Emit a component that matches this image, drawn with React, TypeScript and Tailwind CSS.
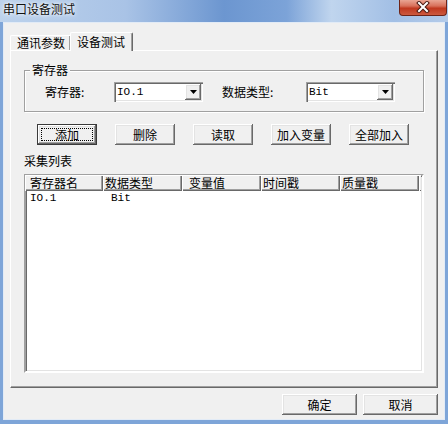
import React from 'react';

const RAISED = 'shadow-[inset_-1px_-1px_0_#696969,inset_1px_1px_0_#ffffff,inset_-2px_-2px_0_#a0a0a0,inset_2px_2px_0_#e3e3e3]';

const COLUMNS = [
    { name: '寄存器名', width: 'w-[78px]', pad: 'pl-[5px]', value: 'IO.1', valuePad: 'pl-[4px]' },
    { name: '数据类型', width: 'w-[79px]', pad: 'pl-[2px]', value: 'Bit', valuePad: 'pl-[7px]' },
    { name: '变量值', width: 'w-[79px]', pad: 'pl-[7px]', value: '', valuePad: 'pl-[4px]' },
    { name: '时间戳', width: 'w-[79px]', pad: 'pl-[2px]', value: '', valuePad: 'pl-[4px]' },
    { name: '质量戳', width: 'w-[79px]', pad: 'pl-[2px]', value: '', valuePad: 'pl-[4px]' },
];

const ACTIONS = ['添加', '删除', '读取', '加入变量', '全部加入'];

const Combo = ({ value }: { value: string }) => (
    <div className="w-[89px] h-[20px] flex p-[2px] bg-white shadow-[inset_1px_1px_0_#a0a0a0,inset_2px_2px_0_#696969,inset_-1px_-1px_0_#ffffff,inset_-2px_-2px_0_#e3e3e3]">
        <span className="flex-1 pl-[1px] font-['Liberation_Mono',monospace] text-[11px] leading-[16px]">{value}</span>
        <span className={`w-[16px] h-[16px] flex items-center justify-center bg-[#f0f0f0] ${RAISED}`}>
            <svg width="7" height="4" viewBox="0 0 7 4">
                <path d="M0 0H7L3.5 4Z" fill="#000" />
            </svg>
        </span>
    </div>
);

const App: React.FC = () => {
    return (
        <div className="w-[448px] h-[424px] flex flex-col bg-[#7ea5d8] font-['Noto_Sans_CJK_SC',sans-serif] text-[12px] text-black">
            {/* Title bar */}
            <div className="h-[22px] flex items-start justify-between bg-[linear-gradient(90deg,#bcd2ec_0%,#a9c3e6_28%,#6c96d0_50%,#7ca3d8_64%,#c0d5ee_74%,#a2bfe5_88%,#b4cbe9_100%)]">
                <span className="pl-[3px] leading-[18px] text-[#111] [text-shadow:0_0_6px_#ffffff,0_0_3px_#ffffff]">串口设备测试</span>
                <div className="w-[48px] h-[16px] mr-[1px] flex items-start justify-center pt-[1px] rounded-b-[4px] border border-t-0 border-[#6e2418] bg-[linear-gradient(180deg,#e9a593_0%,#d8705a_40%,#c0381f_55%,#cc5a3f_100%)]">
                    <svg width="14" height="12" viewBox="0 0 14 12">
                        <path d="M3 2L11 10M11 2L3 10" stroke="#4a1a12" strokeWidth="4" strokeLinecap="square" />
                        <path d="M3 2L11 10M11 2L3 10" stroke="#ffffff" strokeWidth="2" strokeLinecap="square" />
                    </svg>
                </div>
            </div>

            {/* Client area */}
            <div className="flex-1 mx-[3px] mb-[4px] flex flex-col px-[6px] pt-[9px] bg-[#f0f0f0] border border-[#e2ebf6]">
                {/* Tabs */}
                <div className="h-[18px] flex items-end relative z-10">
                    <div className="w-[60px] h-[15px] flex items-center pl-[6px] border-t border-l border-white rounded-tl-[2px] shadow-[inset_-1px_0_0_#a0a0a0] leading-[14px]">
                        通讯参数
                    </div>
                    <div className="w-[63px] h-[19px] -mb-px flex items-start pl-[6px] pt-[2px] bg-[#f0f0f0] border-t border-l border-r border-white border-r-[#696969] rounded-t-[2px] shadow-[inset_-1px_0_0_#a0a0a0] leading-[14px]">
                        设备测试
                    </div>
                </div>

                {/* Tab pane */}
                <div className="h-[338px] flex flex-col border border-white border-r-[#696969] border-b-[#696969] shadow-[inset_-1px_-1px_0_#a0a0a0]">
                    <fieldset className="mt-[11px] mx-[13px] pb-[9px] pt-[4px] border border-[#a0a0a0] shadow-[inset_1px_1px_0_#ffffff,1px_1px_0_#ffffff]">
                        <legend className="ml-[5px] px-[2px] bg-[#f0f0f0] leading-[16px]">寄存器</legend>
                        <div className="flex items-center pl-[20px]">
                            <span className="w-[69px]">寄存器:</span>
                            <Combo value="IO.1" />
                            <span className="w-[84px] ml-[19px]">数据类型:</span>
                            <Combo value="Bit" />
                        </div>
                    </fieldset>

                    <div className="mt-[12px] pl-[26px] flex gap-[18px]">
                        {ACTIONS.map((label, i) =>
                            i === 0 ? (
                                <div key={label} className={`w-[60px] h-[21px] flex border border-[#3a3a3a] bg-[#f0f0f0] ${RAISED}`}>
                                    <span className="flex-1 m-[3px] flex items-center justify-center border border-dotted border-black leading-[12px]">{label}</span>
                                </div>
                            ) : (
                                <div key={label} className={`w-[60px] h-[21px] flex items-center justify-center bg-[#f0f0f0] ${RAISED}`}>
                                    {label}
                                </div>
                            )
                        )}
                    </div>

                    <div className="mt-[8px] ml-[13px] leading-[16px]">采集列表</div>

                    {/* List view */}
                    <div className="mt-[5px] mx-[13px] h-[199px] flex flex-col bg-white border-2 border-[#a0a0a0] border-r-white border-b-white shadow-[inset_1px_1px_0_#696969,inset_-1px_-1px_0_#e3e3e3]">
                        <div className="flex h-[16px] mt-[-1px] ml-[-1px] mr-[1px]">
                            {COLUMNS.map(col => (
                                <div key={col.name} className={`${col.width} ${col.pad} h-[16px] bg-[#f0f0f0] leading-[15px] shadow-[inset_1px_1px_0_#ffffff,inset_-1px_-1px_0_#696969,inset_-2px_-2px_0_#a0a0a0]`}>
                                    {col.name}
                                </div>
                            ))}
                            <div className="flex-1 h-[16px] bg-[#f0f0f0] shadow-[inset_1px_1px_0_#ffffff,inset_0_-1px_0_#696969]" />
                        </div>
                        <div className="flex h-[15px]">
                            {COLUMNS.map(col => (
                                <div key={col.name} className={`${col.width} ${col.valuePad} font-['Liberation_Mono',monospace] text-[11px] leading-[15px]`}>
                                    {col.value}
                                </div>
                            ))}
                        </div>
                    </div>
                </div>

                {/* Dialog buttons */}
                <div className="mt-[6px] flex justify-end gap-[6px]">
                    {['确定', '取消'].map(label => (
                        <div key={label} className={`w-[75px] h-[21px] flex items-center justify-center bg-[#f0f0f0] ${RAISED}`}>
                            {label}
                        </div>
                    ))}
                </div>
            </div>
        </div>
    );
};

export default App;
